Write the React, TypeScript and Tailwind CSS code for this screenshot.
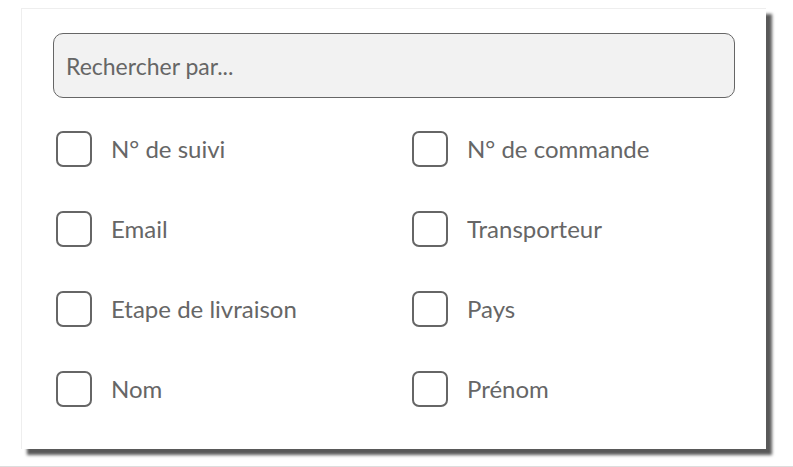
import React from 'react';

const fields: string[][] = [
  ['N° de suivi', 'N° de commande'],
  ['Email', 'Transporteur'],
  ['Etape de livraison', 'Pays'],
  ['Nom', 'Prénom'],
];

const Option: React.FC<{ label: string }> = ({ label }) => (
  <label className="flex items-center cursor-pointer">
    <span className="w-[36px] h-[36px] ml-[3px] border-2 border-[#666] rounded-[7px] bg-white shrink-0" />
    <span className="ml-[19px] text-[24px] text-[#666] leading-none">{label}</span>
  </label>
);

export default function App() {
  return (
    <div
      className="w-[793px] h-[467px] bg-white relative border-b border-[#ddd]"
      style={{ fontFamily: 'Lato, "Noto Sans", sans-serif' }}
    >
      <div className="absolute left-[21px] top-[8px] w-[745px] h-[441px] bg-white border-t border-l border-[#eee] shadow-[6px_6px_3px_rgba(0,0,0,0.65)] pt-[24px] px-[31px]">
        <input
          type="text"
          placeholder="Rechercher par..."
          className="w-[682px] h-[65px] bg-[#f2f2f2] border border-[#666] rounded-[10px] px-[12px] text-[23px] text-[#666] placeholder:text-[#666] outline-none"
        />
        <div className="mt-[33px] grid grid-cols-[356px_1fr] gap-y-[44px]">
          {fields.map(([a, b]) => (
            <React.Fragment key={a}>
              <Option label={a} />
              <Option label={b} />
            </React.Fragment>
          ))}
        </div>
      </div>
    </div>
  );
}
